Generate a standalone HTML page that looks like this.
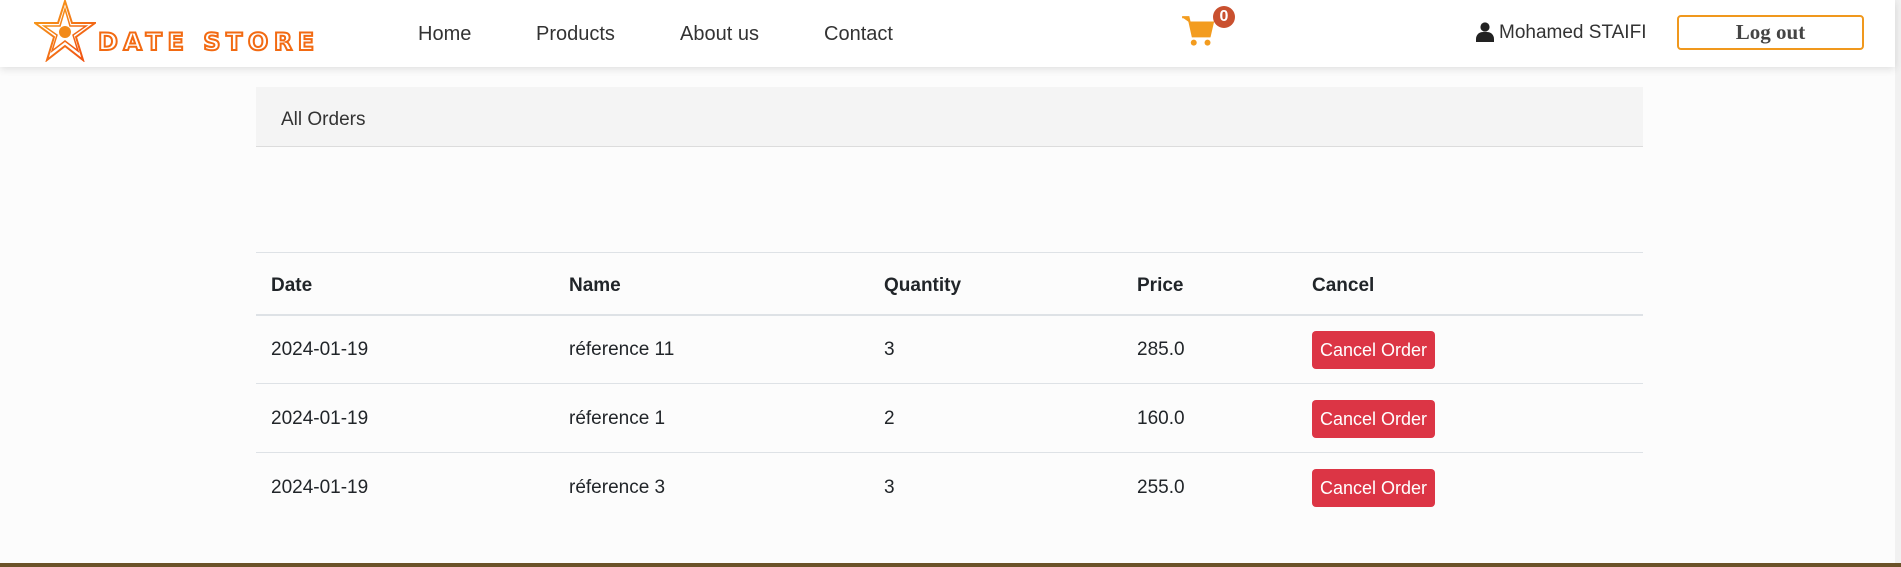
<!DOCTYPE html>
<html><head><meta charset="utf-8"><style>
*{margin:0;padding:0;box-sizing:border-box}
html,body{width:1901px;height:567px;overflow:hidden;background:#fcfcfc;font-family:"Liberation Sans",sans-serif;color:#212529;position:relative}
.nav{position:absolute;left:0;top:0;width:1895px;height:67px;background:#fff;box-shadow:0 2px 8px rgba(0,0,0,.12);z-index:2}
.abs{position:absolute;white-space:nowrap}
.link{font-size:20px;color:#333;top:23px}
.logo{left:98px;top:28px;font-size:24px;font-weight:bold;letter-spacing:5.5px;color:#fff;-webkit-text-stroke:2px #f26a12;font-family:"DejaVu Sans",sans-serif}
.hdr{position:absolute;left:256px;top:87px;width:1387px;height:60px;background:#f4f4f4;border-bottom:1px solid #dcdcdc;font-size:19px;padding:22px 25px 0;color:#333}
table{position:absolute;left:256px;top:252px;width:1387px;border-collapse:collapse;font-size:19px}
th,td{text-align:left;padding:0 15px;border-top:1px solid #dee2e6}
th{height:62px;font-weight:bold;border-bottom:2px solid #dee2e6;padding-top:5px}
td{height:69px;padding-top:2px}
.btn{display:inline-block;background:#dc3545;color:#fff;border-radius:4px;width:123px;height:38px;line-height:38px;text-align:center;font-size:18px}
.foot{position:absolute;left:0;top:563px;width:1901px;height:4px;background:#6b5228}
.sb{position:absolute;left:1895px;top:0;width:6px;height:563px;background:#f1f1f1}
</style></head><body>
<div class="nav">
<svg class="abs" style="left:34px;top:0" width="62" height="62" viewBox="0 0 62 62"><defs><linearGradient id="g" x1="0" y1="0" x2="1" y2="1"><stop offset="0" stop-color="#f7a51c"/><stop offset="1" stop-color="#f04a12"/></linearGradient></defs>
<polygon points="31,1 38,23 61,23 42,37 49,60 31,46 13,60 20,37 1,23 24,23" fill="none" stroke="url(#g)" stroke-width="2"/>
<polygon points="31,9 36,26 52,26 39,35 44,51 31,41 18,51 23,35 10,26 26,26" fill="none" stroke="url(#g)" stroke-width="1.5"/>
<circle cx="31" cy="32" r="6" fill="#f28a1a"/></svg>
<div class="abs logo">DATE STORE</div>
<div class="abs link" style="left:418px">Home</div>
<div class="abs link" style="left:536px">Products</div>
<div class="abs link" style="left:680px">About us</div>
<div class="abs link" style="left:824px">Contact</div>
<svg class="abs" style="left:1180px;top:14px" width="36" height="34" viewBox="0 0 34 32"><path d="M2 3h6l4 18h16l3-13H9" fill="#f39c1f" stroke="#f39c1f" stroke-width="2"/><circle cx="13" cy="27" r="2.8" fill="#f39c1f"/><circle cx="26" cy="27" r="2.8" fill="#f39c1f"/></svg>
<div class="abs" style="left:1213px;top:6px;width:22px;height:22px;border-radius:50%;background:#c9502f;color:#fff;font-weight:bold;font-size:16px;text-align:center;line-height:22px">0</div>
<svg class="abs" style="left:1476px;top:22px" width="18" height="20" viewBox="0 0 18 20"><circle cx="9" cy="5" r="4.6" fill="#222"/><path d="M0 20v-3c0-4 3-7 7-7h4c4 0 7 3 7 7v3z" fill="#222"/></svg>
<div class="abs" style="left:1499px;top:22px;font-size:19px;color:#333">Mohamed STAIFI</div>
<div class="abs" style="left:1677px;top:15px;width:187px;height:35px;border:2px solid #f0981d;border-radius:4px;text-align:center;line-height:31px;font-family:'Liberation Serif',serif;font-weight:bold;font-size:21px;color:#444">Log out</div>
</div>
<div class="sb"></div>
<div class="hdr">All Orders</div>
<table>
<tr><th style="width:298px">Date</th><th style="width:315px">Name</th><th style="width:253px">Quantity</th><th style="width:175px">Price</th><th>Cancel</th></tr>
<tr><td>2024-01-19</td><td>réference 11</td><td>3</td><td>285.0</td><td><span class="btn">Cancel Order</span></td></tr>
<tr><td>2024-01-19</td><td>réference 1</td><td>2</td><td>160.0</td><td><span class="btn">Cancel Order</span></td></tr>
<tr><td>2024-01-19</td><td>réference 3</td><td>3</td><td>255.0</td><td><span class="btn">Cancel Order</span></td></tr>
</table>
<div class="foot"></div>
</body></html>
